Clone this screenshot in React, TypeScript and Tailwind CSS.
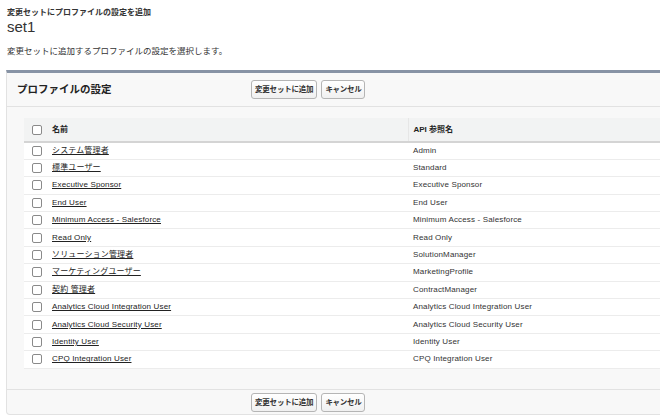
const profiles: [string, string][] = [
  ["システム管理者", "Admin"],
  ["標準ユーザー", "Standard"],
  ["Executive Sponsor", "Executive Sponsor"],
  ["End User", "End User"],
  ["Minimum Access - Salesforce", "Minimum Access - Salesforce"],
  ["Read Only", "Read Only"],
  ["ソリューション管理者", "SolutionManager"],
  ["マーケティングユーザー", "MarketingProfile"],
  ["契約 管理者", "ContractManager"],
  ["Analytics Cloud Integration User", "Analytics Cloud Integration User"],
  ["Analytics Cloud Security User", "Analytics Cloud Security User"],
  ["Identity User", "Identity User"],
  ["CPQ Integration User", "CPQ Integration User"],
];

function Checkbox() {
  return (
    <span className="block w-[10px] h-[10px] rounded-[2px] border border-[#8a8a8a] bg-white" />
  );
}

function Buttons() {
  return (
    <div className="flex gap-[4px]">
      <button className="h-[19px] px-[3px] rounded-[3px] border border-[#b5b5b5] bg-gradient-to-b from-white to-[#f0f0f0] text-[7.5px] font-bold text-[#333] tracking-[-0.2px]">
        変更セットに追加
      </button>
      <button className="h-[19px] px-[3px] rounded-[3px] border border-[#b5b5b5] bg-gradient-to-b from-white to-[#f0f0f0] text-[7.5px] font-bold text-[#333] tracking-[-0.3px]">
        キャンセル
      </button>
    </div>
  );
}

export default function App() {
  return (
    <div
      className="w-[660px] h-[419px] overflow-hidden bg-white text-[#222]"
      style={{ fontFamily: '"Liberation Sans", "Noto Sans CJK JP", sans-serif' }}
    >
      <div className="pl-[7px] pt-[8px]">
        <div className="text-[8px] font-bold leading-[10px] text-[#333]">
          変更セットにプロファイルの設定を追加
        </div>
        <div className="text-[15px] leading-[17px] text-[#333]">set1</div>
        <div className="mt-[10px] text-[8.5px] leading-[12px] text-[#333]">
          変更セットに追加するプロファイルの設定を選択します。
        </div>
      </div>

      <div className="ml-[6px] mt-[13px] w-[720px] border-t-[3px] border-[#8793a5] border-x border-b border-x-[#e2e2e2] border-b-[#e2e2e2] rounded-b-[4px] bg-[#f8f8f8]">
        <div className="flex items-center h-[34px] border-b border-[#e2e2e2] pl-[10px]">
          <div className="w-[234px] text-[10.5px] font-bold text-[#222]">プロファイルの設定</div>
          <Buttons />
        </div>

        <div className="pt-[11px] pb-[20px] pl-[17px]">
          <table className="w-[680px] border-collapse bg-white text-[8px]">
            <thead>
              <tr className="h-[24px] bg-[#f2f3f3] border-b-2 border-[#d4d4d4]">
                <th className="w-[23px] pl-[8px] text-left">
                  <Checkbox />
                </th>
                <th className="w-[361px] pl-[5px] text-left font-bold border-r border-[#e6e6e6]">名前</th>
                <th className="pl-[5px] text-left font-bold">API 参照名</th>
              </tr>
            </thead>
            <tbody className="tracking-[0.15px]">
              {profiles.map(([name, api]) => (
                <tr key={name} className="h-[17.4px] border-b border-[#ececec]">
                  <td className="pl-[8px]">
                    <Checkbox />
                  </td>
                  <td className="pl-[5px]">
                    <span className="underline underline-offset-[1px] text-[#222]">{name}</span>
                  </td>
                  <td className="pl-[5px] text-[#333]">{api}</td>
                </tr>
              ))}
            </tbody>
          </table>
        </div>

        <div className="flex items-center h-[25px] border-t border-[#e2e2e2] pl-[244px] pt-[2px]">
          <Buttons />
        </div>
      </div>
    </div>
  );
}
